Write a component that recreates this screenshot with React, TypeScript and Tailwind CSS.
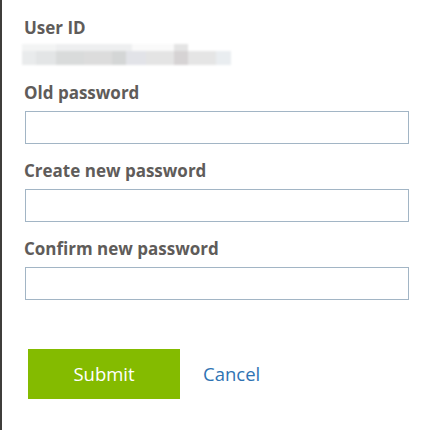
import React, { useState } from 'react';

const fieldFont = { fontFamily: '"Open Sans", "Noto Sans", sans-serif' };

function Field({ label, value, onChange }: { label: string; value: string; onChange: (v: string) => void }) {
  return (
    <div className="mb-[17px]">
      <label className="block text-[17px] leading-[20px] font-bold text-[#5f5c5a] mb-[8px]">{label}</label>
      <input
        type="password"
        value={value}
        onChange={(e) => onChange(e.target.value)}
        className="block w-[384px] h-[33px] ml-[1px] border border-[#a2b5c5] bg-white px-2 outline-none"
      />
    </div>
  );
}

export default function App() {
  const [oldPw, setOldPw] = useState('');
  const [newPw, setNewPw] = useState('');
  const [confirmPw, setConfirmPw] = useState('');

  return (
    <div className="w-[445px] h-[430px] bg-white border-l-2 border-[#3f3d3b] overflow-hidden" style={fieldFont}>
      <div className="pl-[22px] pt-[18px]">
        <div className="text-[17px] leading-[20px] font-bold text-[#5f5c5a]">User ID</div>
        {/* blurred-out user id */}
        <div className="mt-[6px] mb-[18px] ml-[-2px] w-[209px] h-[21px] blur-[0.8px]">
          <div className="flex h-[7px]">
            <div className="w-[34px] bg-[#f3f4f4]" />
            <div className="w-[76px] bg-[#eeeff0]" />
            <div className="w-[42px] bg-[#fafafa]" />
            <div className="w-[14px] bg-[#e4e4e4]" />
            <div className="w-[43px] bg-white" />
          </div>
          <div className="flex h-[14px]">
            <div className="w-[14px] bg-[#e9ebec]" />
            <div className="w-[20px] bg-[#e3e5e6]" />
            <div className="w-[28px] bg-[#d9dbdb]" />
            <div className="w-[28px] bg-[#dcdcdc]" />
            <div className="w-[14px] bg-[#d4d6d6]" />
            <div className="w-[20px] bg-[#e2e3e8]" />
            <div className="w-[28px] bg-[#e4e4e4]" />
            <div className="w-[14px] bg-[#d6d3d4]" />
            <div className="w-[28px] bg-[#e5e5e5]" />
            <div className="w-[15px] bg-[#e9edf0]" />
          </div>
        </div>
        <Field label="Old password" value={oldPw} onChange={setOldPw} />
        <Field label="Create new password" value={newPw} onChange={setNewPw} />
        <Field label="Confirm new password" value={confirmPw} onChange={setConfirmPw} />
        <div className="flex items-center mt-[49px] ml-[4px] gap-[23px]">
          <button className="w-[152px] h-[50px] bg-[#84bb00] text-white text-[18.5px]">Submit</button>
          <a href="#" className="text-[18.5px] text-[#2f73b3]">Cancel</a>
        </div>
      </div>
    </div>
  );
}
